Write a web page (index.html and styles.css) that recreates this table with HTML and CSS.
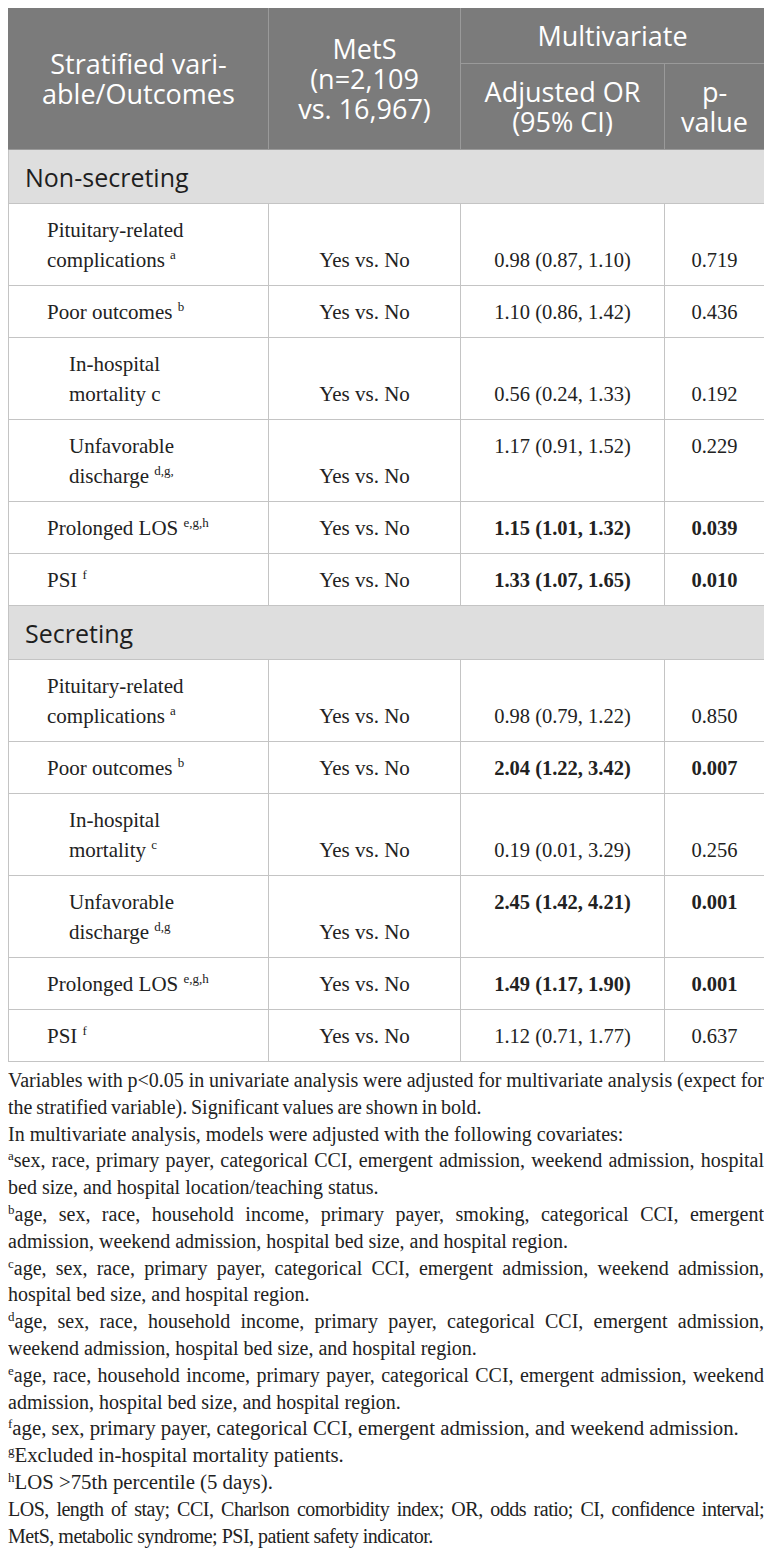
FILE: index.html
```html
<!DOCTYPE html>
<html>
<head>
<meta charset="utf-8">
<link rel="stylesheet" href="styles.css">
</head>
<body>
<table class="tbl">
  <colgroup>
    <col class="c1"><col class="c2"><col class="c3"><col class="c4">
  </colgroup>
  <thead>
    <tr>
      <th rowspan="2">Stratified vari-<br>able/Outcomes</th>
      <th rowspan="2">MetS<br>(n=2,109<br>vs. 16,967)</th>
      <th colspan="2" class="h1">Multivariate</th>
    </tr>
    <tr>
      <th>Adjusted OR<br>(95% CI)</th>
      <th>p-<br>value</th>
    </tr>
  </thead>
  <tbody>
    <tr class="sec"><td colspan="4">Non-secreting</td></tr>
    <tr>
      <td class="lab">Pituitary-related<br>complications <sup>a</sup></td>
      <td class="bot">Yes vs. No</td>
      <td class="bot num">0.98 (0.87, 1.10)</td>
      <td class="bot num">0.719</td>
    </tr>
    <tr>
      <td class="lab">Poor outcomes <sup>b</sup></td>
      <td>Yes vs. No</td>
      <td class="num">1.10 (0.86, 1.42)</td>
      <td class="num">0.436</td>
    </tr>
    <tr>
      <td class="lab sub">In-hospital<br>mortality c</td>
      <td class="bot">Yes vs. No</td>
      <td class="bot num">0.56 (0.24, 1.33)</td>
      <td class="bot num">0.192</td>
    </tr>
    <tr>
      <td class="lab sub">Unfavorable<br>discharge <sup>d,g,</sup></td>
      <td class="bot">Yes vs. No</td>
      <td class="top num">1.17 (0.91, 1.52)</td>
      <td class="top num">0.229</td>
    </tr>
    <tr>
      <td class="lab">Prolonged LOS <sup>e,g,h</sup></td>
      <td>Yes vs. No</td>
      <td class="b num">1.15 (1.01, 1.32)</td>
      <td class="b num">0.039</td>
    </tr>
    <tr>
      <td class="lab">PSI <sup>f</sup></td>
      <td>Yes vs. No</td>
      <td class="b num">1.33 (1.07, 1.65)</td>
      <td class="b num">0.010</td>
    </tr>
    <tr class="sec"><td colspan="4">Secreting</td></tr>
    <tr>
      <td class="lab">Pituitary-related<br>complications <sup>a</sup></td>
      <td class="bot">Yes vs. No</td>
      <td class="bot num">0.98 (0.79, 1.22)</td>
      <td class="bot num">0.850</td>
    </tr>
    <tr>
      <td class="lab">Poor outcomes <sup>b</sup></td>
      <td>Yes vs. No</td>
      <td class="b num">2.04 (1.22, 3.42)</td>
      <td class="b num">0.007</td>
    </tr>
    <tr>
      <td class="lab sub">In-hospital<br>mortality <sup>c</sup></td>
      <td class="bot">Yes vs. No</td>
      <td class="bot num">0.19 (0.01, 3.29)</td>
      <td class="bot num">0.256</td>
    </tr>
    <tr>
      <td class="lab sub">Unfavorable<br>discharge <sup>d,g</sup></td>
      <td class="bot">Yes vs. No</td>
      <td class="top b num">2.45 (1.42, 4.21)</td>
      <td class="top b num">0.001</td>
    </tr>
    <tr>
      <td class="lab">Prolonged LOS <sup>e,g,h</sup></td>
      <td>Yes vs. No</td>
      <td class="b num">1.49 (1.17, 1.90)</td>
      <td class="b num">0.001</td>
    </tr>
    <tr>
      <td class="lab">PSI <sup>f</sup></td>
      <td>Yes vs. No</td>
      <td class="num">1.12 (0.71, 1.77)</td>
      <td class="num">0.637</td>
    </tr>
  </tbody>
</table>
<div class="notes">
  <p class="first">Variables with p&lt;0.05 in univariate analysis were adjusted for multivariate analysis (expect for the stratified variable). Significant values are shown in bold.</p>
  <p>In multivariate analysis, models were adjusted with the following covariates:</p>
  <p><sup>a</sup>sex, race, primary payer, categorical CCI, emergent admission, weekend admission, hospital bed size, and hospital location/teaching status.</p>
  <p><sup>b</sup>age, sex, race, household income, primary payer, smoking, categorical CCI, emergent admission, weekend admission, hospital bed size, and hospital region.</p>
  <p><sup>c</sup>age, sex, race, primary payer, categorical CCI, emergent admission, weekend admission, hospital bed size, and hospital region.</p>
  <p><sup>d</sup>age, sex, race, household income, primary payer, categorical CCI, emergent admission, weekend admission, hospital bed size, and hospital region.</p>
  <p><sup>e</sup>age, race, household income, primary payer, categorical CCI, emergent admission, weekend admission, hospital bed size, and hospital region.</p>
  <p class="wide"><sup>f</sup>age, sex, primary payer, categorical CCI, emergent admission, and weekend admission.</p>
  <p class="wide"><sup>g</sup>Excluded in-hospital mortality patients.</p>
  <p class="wide"><sup>h</sup>LOS &gt;75th percentile (5 days).</p>
  <p class="last">LOS, length of stay; CCI, Charlson comorbidity index; OR, odds ratio; CI, confidence interval; MetS, metabolic syndrome; PSI, patient safety indicator.</p>
</div>
</body>
</html>
```

FILE: styles.css
```css
html, body {
  background: #ffffff;
}
body {
  margin: 8px;
  color: #222222;
  font-family: "Liberation Serif", "Times New Roman", serif;
}
.tbl {
  width: 756px;
  border-collapse: collapse;
  table-layout: fixed;
}
.c1 { width: 260px; }
.c2 { width: 192px; }
.c3 { width: 204px; }
.c4 { width: 100px; }

.tbl th {
  background: #7b7b7b;
  color: #ffffff;
  font-family: "Open Sans", "Noto Sans", sans-serif;
  font-weight: 400;
  font-size: 27px;
  line-height: 30px;
  padding: 13px 4px 12px;
  text-align: center;
  vertical-align: middle;
  border: 1px solid #9a9a9a;
  border-top: none;
}
.tbl thead tr:first-child th:first-child { border-left: 1px solid #7b7b7b; }
.tbl thead th:last-child { border-right: 1px solid #9a9a9a; }

.tbl td {
  font-size: 21px;
  line-height: 30px;
  padding: 11px 6px 10px;
  text-align: center;
  vertical-align: middle;
  border: 1px solid #c4c4c4;
}
.tbl td.num { font-size: 20.5px; }
.tbl td.lab {
  text-align: left;
  padding-left: 38px;
  vertical-align: top;
}
.tbl td.lab.sub {
  padding-left: 60px;
}
.tbl td.bot { vertical-align: bottom; }
.tbl td.top { vertical-align: top; }
.tbl td.b { font-weight: 700; }

.tbl tr.sec td {
  background: #dedede;
  font-family: "Open Sans", "Noto Sans", sans-serif;
  font-size: 25px;
  line-height: 30px;
  padding: 12px 16px 11px;
  text-align: left;
  color: #1e1e1e;
}

.tbl sup {
  font-size: 13px;
  line-height: 0;
  vertical-align: 8px;
}

.notes {
  margin-top: 5px;
  font-size: 20px;
  line-height: 26.8px;
  text-align: justify;
  color: #222222;
}
.notes p {
  margin: 0;
}
.notes .first {
  word-spacing: -1.2px;
}
.notes sup {
  font-size: 13px;
  line-height: 0;
  vertical-align: 7px;
}
.notes .wide {
  font-size: 20.8px;
}
.notes .last {
  font-size: 20px;
  letter-spacing: -0.5px;
}
```
